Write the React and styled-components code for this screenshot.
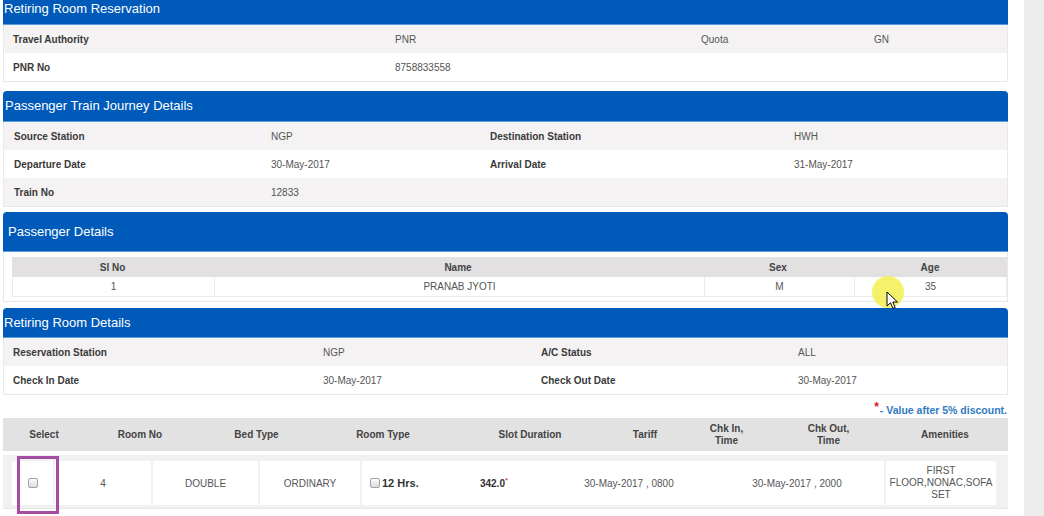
import React from 'react';
import styled, { createGlobalStyle } from 'styled-components';

const GlobalStyle = createGlobalStyle`
  html, body {
    margin: 0;
    padding: 0;
    background: #fff;
    font-family: "Liberation Sans", Arial, sans-serif;
  }
  body { overflow: hidden; }
`;

// [label, value, plainLabel]
const reservation = [
  [['Travel Authority', 'PNR'], ['Quota', 'GN', true]],
  [['PNR No', '8758833558']],
];

const journey = [
  [['Source Station', 'NGP'], ['Destination Station', 'HWH']],
  [['Departure Date', '30-May-2017'], ['Arrival Date', '31-May-2017']],
  [['Train No', '12833']],
];

const roomDetails = [
  [['Reservation Station', 'NGP'], ['A/C Status', 'ALL']],
  [['Check In Date', '30-May-2017'], ['Check Out Date', '30-May-2017']],
];

const roomCols = ['Select', 'Room No', 'Bed Type', 'Room Type', 'Slot Duration', 'Tariff', 'Chk In,\nTime', 'Chk Out,\nTime', 'Amenities'];

function InfoBlock({ rows, cols, pad }) {
  return rows.map((row, i) => (
    <InfoRow key={i} $cols={cols} $pad={pad} $shade={i % 2 === 0}>
      {row.map(([label, value, plain]) => (
        <React.Fragment key={label}>
          {plain ? <Value>{label}</Value> : <Label>{label}</Label>}
          <Value>{value}</Value>
        </React.Fragment>
      ))}
    </InfoRow>
  ));
}

export default function App() {
  return (
    <Page>
      <GlobalStyle />
      <Main>
        <Panel $gap={9}>
          <PanelHeader $h={25} $pad={1} $top>Retiring Room Reservation</PanelHeader>
          <InfoBlock rows={reservation} cols="382px 306px 173px 1fr" pad={9} />
        </Panel>

        <Panel $gap={5}>
          <PanelHeader $h={31} $pad={2}>Passenger Train Journey Details</PanelHeader>
          <InfoBlock rows={journey} cols="257px 219px 304px 1fr" pad={10} />
        </Panel>

        <Panel $gap={6}>
          <PanelHeader $h={40} $pad={5}>Passenger Details</PanelHeader>
          <PaxTable>
            <PaxHead>
              <span>Sl No</span>
              <span>Name</span>
              <span>Sex</span>
              <span>Age</span>
            </PaxHead>
            <PaxRow>
              <PaxCell>1</PaxCell>
              <PaxCell>PRANAB JYOTI</PaxCell>
              <PaxCell>M</PaxCell>
              <PaxCell>35</PaxCell>
            </PaxRow>
          </PaxTable>
        </Panel>

        <Panel $gap={0}>
          <PanelHeader $h={30} $pad={1}>Retiring Room Details</PanelHeader>
          <InfoBlock rows={roomDetails} cols="310px 218px 257px 1fr" pad={9} />
        </Panel>

        <Note>
          <Star>*</Star>- Value after 5% discount.
        </Note>

        <RoomTable>
          <RoomHead>
            {roomCols.map((c) => (
              <span key={c}>{c}</span>
            ))}
          </RoomHead>
          <RoomRow>
            <Cell $sep><Check /></Cell>
            <Cell $sep>4</Cell>
            <Cell $sep>DOUBLE</Cell>
            <Cell $sep>ORDINARY</Cell>
            <Cell $align="flex-start" $padLeft={8}>
              <Check />
              <Strong $size={11}>12 Hrs.</Strong>
            </Cell>
            <Cell>
              <Strong>342.0</Strong>
              <Tiny>*</Tiny>
            </Cell>
            <Cell>30-May-2017 , 0800</Cell>
            <Cell $sep>30-May-2017 , 2000</Cell>
            <Cell>
              <Amenity>FIRST<br />FLOOR,NONAC,SOFA<br />SET</Amenity>
            </Cell>
          </RoomRow>
          <Highlight />
        </RoomTable>
      </Main>
      <Sidebar />

      <Spot />
      <Pointer width="13" height="19" viewBox="0 0 13 19">
        <path d="M1 1 L1 15 L4.5 11.8 L7 17.5 L9.2 16.5 L6.8 11 L11.5 11 Z" fill="#fff" stroke="#000" strokeWidth="1" strokeLinejoin="round" />
      </Pointer>
    </Page>
  );
}

const Page = styled.div`
  position: relative;
  display: flex;
  width: 1044px;
  height: 516px;
  overflow: hidden;
`;

const Main = styled.div`
  width: 1005px;
  margin-left: 3px;
  display: flex;
  flex-direction: column;
`;

const Sidebar = styled.div`
  margin-left: auto;
  width: 20px;
  background: #ececec;
`;

const Panel = styled.section`
  margin-bottom: ${(p) => p.$gap}px;
  border: 1px solid #e8e8e8;
  border-top: none;
  border-radius: 4px 4px 0 0;
`;

const PanelHeader = styled.div`
  box-sizing: border-box;
  height: ${(p) => p.$h}px;
  padding-left: ${(p) => p.$pad}px;
  padding-top: ${(p) => (p.$top ? 1 : 0)}px;
  display: flex;
  align-items: ${(p) => (p.$top ? 'flex-start' : 'center')};
  background: #005ab9;
  border-bottom: 1px solid #5a9bdc;
  border-radius: ${(p) => (p.$top ? 0 : 4)}px ${(p) => (p.$top ? 0 : 4)}px 0 0;
  margin: 0 -1px;
  color: #fff;
  font-size: 13px;
  line-height: 16px;
`;

const InfoRow = styled.div`
  display: grid;
  grid-template-columns: ${(p) => p.$cols};
  align-items: center;
  height: 28px;
  padding-left: ${(p) => p.$pad}px;
  background: ${(p) => (p.$shade ? '#f4f2f3' : '#fff')};
  font-size: 10px;
`;

const Label = styled.span`
  font-weight: bold;
  color: #3a3a3a;
`;

const Value = styled.span`
  color: #555;
`;

const PaxTable = styled.div`
  padding: 5px 0 4px 8px;
  font-size: 10px;
`;

const PaxHead = styled.div`
  display: grid;
  grid-template-columns: 201px 490px 150px 1fr;
  height: 20px;
  align-items: center;
  text-align: center;
  background: #e2e0e1;
  font-weight: bold;
  color: #444;
`;

const PaxRow = styled.div`
  display: grid;
  grid-template-columns: 201px 490px 150px 1fr;
  height: 20px;
  box-sizing: border-box;
  border: 1px solid #ececec;
  border-top: none;
  color: #555;
`;

const PaxCell = styled.div`
  display: flex;
  align-items: center;
  justify-content: center;
  & + & { border-left: 1px solid #ececec; }
`;

const Note = styled.div`
  margin: 5px 0 1px;
  padding-right: 1px;
  text-align: right;
  font-size: 10.5px;
  line-height: 14px;
  font-weight: bold;
  color: #2f7bbf;
`;

const Star = styled.span`
  color: #d42020;
  font-size: 12px;
  vertical-align: 3px;
  margin-right: 1px;
`;

const RoomTable = styled.div`
  position: relative;
`;

const RoomHead = styled.div`
  display: grid;
  grid-template-columns: 82px 110px 123px 130px 164px 66px 97px 107px 1fr;
  height: 33px;
  align-items: center;
  text-align: center;
  background: #e2e2e2;
  font-size: 10px;
  line-height: 12px;
  font-weight: bold;
  color: #444;
  white-space: pre-line;
`;

const RoomRow = styled.div`
  display: grid;
  grid-template-columns: 43px 98px 107px 102px 78px 108px 162px 176px 1fr;
  margin-top: 4px;
  padding: 6px 12px 3px 9px;
  background: #f1f1f1;
  border-bottom: 1px solid #e6e6e6;
`;

const Cell = styled.div`
  height: 44px;
  display: flex;
  align-items: center;
  justify-content: ${(p) => p.$align || 'center'};
  padding-left: ${(p) => p.$padLeft || 0}px;
  background: #fff;
  border-right: ${(p) => (p.$sep ? '2px solid #f1f1f1' : 'none')};
  font-size: 10px;
  color: #555;
`;

const Check = styled.span`
  box-sizing: border-box;
  width: 10px;
  height: 10px;
  border: 1px solid #a3a3a3;
  border-radius: 2px;
  background: linear-gradient(#fbfbfb, #dcdcdc);
`;

const Strong = styled.span`
  font-weight: bold;
  color: #333;
  font-size: ${(p) => p.$size || 10}px;
  margin-left: ${(p) => (p.$size ? 2 : 0)}px;
`;

const Tiny = styled.span`
  color: #d42020;
  font-size: 8px;
  align-self: flex-start;
  margin-top: 15px;
`;

const Amenity = styled.div`
  text-align: center;
  line-height: 12px;
`;

const Highlight = styled.div`
  position: absolute;
  left: 14px;
  top: 38px;
  width: 42px;
  height: 58px;
  box-sizing: border-box;
  border: 3px solid #a44da2;
`;

const Spot = styled.div`
  position: absolute;
  left: 872px;
  top: 276px;
  width: 32px;
  height: 32px;
  border-radius: 50%;
  background: rgba(245, 238, 80, 0.85);
`;

const Pointer = styled.svg`
  position: absolute;
  left: 886px;
  top: 291px;
`;
